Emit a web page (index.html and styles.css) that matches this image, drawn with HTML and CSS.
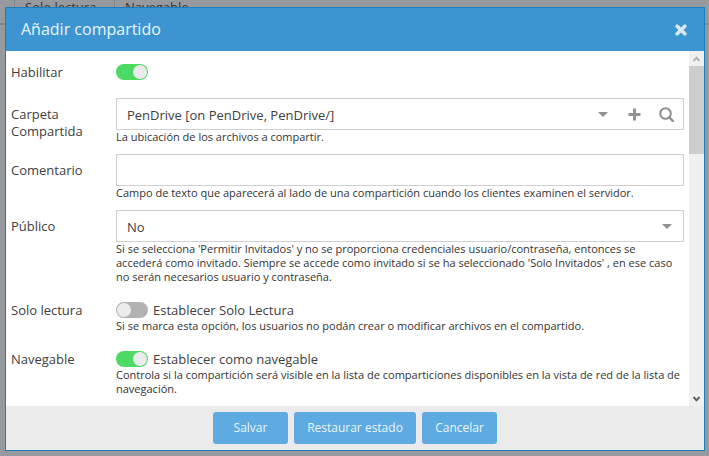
FILE: index.html
```html
<!DOCTYPE html>
<html lang="es">
<head>
<meta charset="utf-8">
<title>Añadir compartido</title>
<link rel="stylesheet" href="styles.css">
</head>
<body>
<div class="grid-header">
  <span class="col first"></span><span class="col second">Solo lectura</span><span class="col">Navegable</span>
</div>
<section class="dialog">
  <header class="title-bar">
    <h1>Añadir compartido</h1>
    <svg class="close" width="12" height="12" viewBox="0 0 12 12"><path d="M2.2 2.2 9.8 9.8M9.8 2.2 2.2 9.8" stroke="#d8e9f5" stroke-width="3.6" stroke-linecap="round"/></svg>
  </header>
  <div class="body">
    <form class="form">
      <div class="row enable"><span class="label">Habilitar</span><div><div class="check"><i class="toggle on"></i></div></div></div>
      <div class="row field folder"><span class="label">Carpeta Compartida</span>
        <div>
          <div class="input"><span class="value v-folder">PenDrive [on PenDrive, PenDrive/]</span>
            <span class="icons">
              <svg width="10" height="5" viewBox="0 0 10 5"><path d="M0 0h10L5 5z" fill="#919191"/></svg>
              <svg width="13" height="13" viewBox="0 0 13 13"><path d="M6.5.5v12M.5 6.5h12" stroke="#919191" stroke-width="3"/></svg>
              <svg width="15" height="15" viewBox="0 0 15 15"><circle cx="6.5" cy="6.5" r="5.3" fill="none" stroke="#919191" stroke-width="2.1"/><path d="m10.3 10.3 3.5 3.5" stroke="#919191" stroke-width="2.4" stroke-linecap="round"/></svg>
            </span>
          </div>
          <p class="help">La ubicación de los archivos a compartir.</p>
        </div>
      </div>
      <div class="row field"><span class="label">Comentario</span>
        <div><div class="input"></div><p class="help">Campo de texto que aparecerá al lado de una compartición cuando los clientes examinen el servidor.</p></div>
      </div>
      <div class="row field public"><span class="label">Público</span>
        <div>
          <div class="input"><span class="value">No</span><span class="icons single"><svg width="10" height="5" viewBox="0 0 10 5"><path d="M0 0h10L5 5z" fill="#919191"/></svg></span></div>
          <p class="help">Si se selecciona 'Permitir Invitados' y no se proporciona credenciales usuario/contraseña, entonces se<br>accederá como invitado. Siempre se accede como invitado si se ha seleccionado 'Solo Invitados' , en ese caso<br>no serán necesarios usuario y contraseña.</p>
        </div>
      </div>
      <div class="row readonly"><span class="label">Solo lectura</span>
        <div><div class="check"><i class="toggle"></i><span>Establecer Solo Lectura</span></div><p class="help">Si se marca esta opción, los usuarios no podán crear o modificar archivos en el compartido.</p></div>
      </div>
      <div class="row"><span class="label">Navegable</span>
        <div><div class="check"><i class="toggle on"></i><span>Establecer como navegable</span></div><p class="help">Controla si la compartición será visible en la lista de comparticiones disponibles en la vista de red de la lista de<br>navegación.</p></div>
      </div>
    </form>
    <div class="scrollbar">
      <span class="arrow"><svg width="7" height="6" viewBox="0 0 7 6"><path d="M.5 5 3.5 1.7 6.5 5" fill="none" stroke="#b3b3b3" stroke-width="2"/></svg></span>
      <span class="thumb"></span>
      <span class="arrow down"><svg width="7" height="6" viewBox="0 0 7 6"><path d="M.5 1 3.5 4.3 6.5 1" fill="none" stroke="#606060" stroke-width="2"/></svg></span>
    </div>
  </div>
  <footer class="actions"><button class="short">Salvar</button><button class="long">Restaurar estado</button><button class="short">Cancelar</button></footer>
</section>
</body>
</html>
```
FILE: styles.css
```css
* { box-sizing: border-box; }
body {
  margin: 0;
  height: 456px;
  overflow: hidden;
  background: #96999e;
  color: #404040;
  font: 13px/17px "Open Sans", "Noto Sans", sans-serif;
}
.grid-header { display: flex; height: 25px; border-bottom: 2px solid #828488; color: #34363a; }
.col { padding-left: 10px; line-height: 15px; }
.first { width: 15px; border-right: 1px solid #828488; }
.second { width: 100px; border-right: 1px solid #828488; }
.dialog {
  position: absolute;
  left: 5px;
  top: 7px;
  width: 700px;
  height: 444px;
  display: flex;
  flex-direction: column;
  border: 1px solid #1c7ebd;
  background: #fff;
}
.title-bar {
  display: flex;
  flex: 0 0 43px;
  align-items: center;
  justify-content: space-between;
  padding: 0 17px 0 15px;
  background: #3c95d0;
  color: #ebf4fa;
}
h1 { margin: 0; padding-bottom: 1px; font-size: 16px; font-weight: 400; line-height: 22px; }
.body { display: flex; flex: 1; min-height: 0; }
.form { flex: 1; padding: 13px 5px 0; }
.row { display: grid; grid-template-columns: 105px 568px; height: 49px; }
.enable { height: 34px; }
.field { height: 56px; }
.public { height: 92px; }
.label { width: 90px; }
.field .label { padding-top: 8px; }
.input {
  display: flex;
  align-items: center;
  justify-content: space-between;
  height: 32px;
  padding: 2px 9px 0 10px;
  border: 1px solid #cfcfcf;
}
.icons { display: flex; align-items: center; gap: 20px; height: 28px; margin-top: -2px; }
.folder .icons svg:last-child { margin-left: -2px; }
.icons.single { margin-right: 2px; }
.help { margin: 0; font-size: 11px; line-height: 14px; white-space: nowrap; color: #333; }
.check { display: flex; height: 17px; gap: 5px; }
.toggle { width: 32px; height: 16px; padding: 1px; border-radius: 8px; background: #b2b2b2; }
.toggle::before { content: ""; display: block; width: 14px; height: 14px; border-radius: 50%; background: #ebebeb; }
.toggle.on { background: #4cd964; }
.toggle.on::before { margin-left: auto; }
.scrollbar { display: flex; flex-direction: column; width: 15px; background: #f0f0f0; }
.arrow { display: flex; align-items: center; justify-content: center; height: 15px; }
.thumb { height: 88px; background: #cdcdcd; }
.down { margin-top: auto; }
.actions { display: flex; flex: 0 0 44px; align-items: center; justify-content: center; gap: 6px; background: #ebebeb; }
button { height: 32px; padding: 0 0 1px; border: 0; border-radius: 3px; background: #5dabe0; color: #ebf4fb; font: 12px/16px "Open Sans", "Noto Sans", sans-serif; }
.short { width: 75px; }
.long { width: 122px; }
```
